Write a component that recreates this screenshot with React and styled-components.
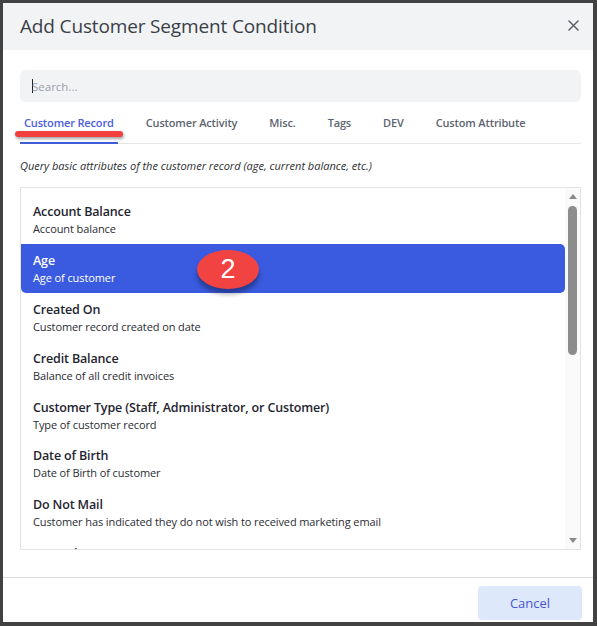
import React from "react";
import styled, { createGlobalStyle } from "styled-components";

const Global = createGlobalStyle`
  html, body { margin: 0; padding: 0; background: #424242; }
  * { box-sizing: border-box; }
  body { font-family: "Open Sans", "Noto Sans", sans-serif; }
`;

const Frame = styled.div`
  width: 597px;
  height: 626px;
  padding: 3px 4px 4px 3px;
  background: #424242;
`;

const Dialog = styled.div`
  position: relative;
  width: 100%;
  height: 100%;
  background: #fff;
  display: flex;
  flex-direction: column;
`;

const Header = styled.div`
  height: 47px;
  flex: none;
  background: #f2f3f5;
  display: flex;
  align-items: center;
  justify-content: space-between;
  padding: 0 10px 2px 17px;
`;

const Title = styled.h1`
  margin: 0;
  font-size: 19px;
  font-weight: 400;
  color: #3a3f47;
  letter-spacing: -0.15px;
`;

const CloseBtn = styled.button`
  width: 20px;
  height: 20px;
  border: 0;
  padding: 0;
  background: transparent;
  display: flex;
  align-items: center;
  justify-content: center;
  color: #5b6069;
`;

const Body = styled.div`
  flex: 1;
  padding: 20px 12px 0 17px;
  display: flex;
  flex-direction: column;
`;

const Search = styled.div`
  height: 32px;
  background: #f2f3f5;
  border-radius: 6px;
  display: flex;
  align-items: center;
  padding-left: 12px;
  font-size: 11.5px;
  color: #9aa0a8;
`;

const Caret = styled.span`
  width: 1px;
  height: 14px;
  background: #222;
  margin-right: -1px;
`;

const Tabs = styled.div`
  height: 42px;
  display: flex;
  gap: 24px;
  padding-bottom: 3px;
  border-bottom: 1px solid #e4e6ea;
`;

const Tab = styled.div`
  padding: 0 4px;
  display: flex;
  align-items: center;
  font-size: 11px;
  font-weight: 600;
  color: ${(p) => (p.$active ? "#4b5ce0" : "#5d6470")};
  border-bottom: 2px solid ${(p) => (p.$active ? "#3f5bd8" : "transparent")};
  margin-bottom: -4px;
  letter-spacing: -0.15px;
`;

const Desc = styled.p`
  margin: 14px 0 13px;
  font-size: 11px;
  line-height: 16px;
  font-style: italic;
  color: #2c2f33;
`;

const ListBox = styled.div`
  height: 363px;
  border: 1px solid #e2e3e6;
  display: flex;
  overflow: hidden;
`;

const Items = styled.div`
  flex: 1;
  padding-top: 7px;
  overflow: hidden;
`;

const Item = styled.div`
  height: 48.8px;
  padding: 2px 12px 0;
  display: flex;
  flex-direction: column;
  justify-content: center;
  border-radius: 0 5px 5px 5px;
  background: ${(p) => (p.$selected ? "#3a5be0" : "transparent")};
  color: ${(p) => (p.$selected ? "#ffffff" : "#1f2530")};
`;

const ItemTitle = styled.div`
  font-size: 12.5px;
  line-height: 17px;
  font-weight: 600;
  letter-spacing: -0.15px;
`;

const ItemSub = styled.div`
  margin-top: 1px;
  font-size: 11px;
  line-height: 16px;
  color: ${(p) => (p.$selected ? "#ffffff" : "#2a2d33")};
  letter-spacing: -0.1px;
`;

const ScrollTrack = styled.div`
  width: 15px;
  flex: none;
  background: #fafafa;
  display: flex;
  flex-direction: column;
  align-items: center;
  padding: 4px 0;
`;

const Arrow = styled.div`
  width: 0;
  height: 0;
  border-left: 4px solid transparent;
  border-right: 4px solid transparent;
  ${(p) =>
    p.$down
      ? "border-top: 5px solid #8a8a8a;"
      : "border-bottom: 5px solid #8a8a8a;"}
  margin: 2px 0;
`;

const Thumb = styled.div`
  width: 9px;
  height: 149px;
  background: #8c8c8c;
  border-radius: 5px;
  margin-top: 5px;
`;

const Spacer = styled.div`
  flex: 1;
`;

const Footer = styled.div`
  height: 45px;
  flex: none;
  border-top: 1px solid #dcdde0;
  display: flex;
  justify-content: flex-end;
  align-items: flex-start;
  padding: 8px 11px 0 0;
`;

const CancelBtn = styled.button`
  width: 104px;
  height: 34px;
  border: 0;
  border-radius: 4px;
  background: #dde8fb;
  color: #4655d6;
  font-family: inherit;
  font-size: 13px;
`;

const Underline = styled.div`
  position: absolute;
  left: 12px;
  top: 128px;
  width: 108px;
  height: 6px;
  border-radius: 3px;
  background: #f2403f;
  box-shadow: 1px 2px 3px rgba(0, 0, 0, 0.35);
`;

const Badge = styled.div`
  position: absolute;
  left: 194px;
  top: 247px;
  width: 62px;
  height: 39px;
  border-radius: 50%;
  background: #f24343;
  color: #fff;
  display: flex;
  align-items: center;
  justify-content: center;
  font-family: "Liberation Sans", Arial, sans-serif;
  font-size: 27px;
  box-shadow: 0 5px 5px rgba(0, 0, 0, 0.35);
`;

const items = [
  ["Account Balance", "Account balance"],
  ["Age", "Age of customer"],
  ["Created On", "Customer record created on date"],
  ["Credit Balance", "Balance of all credit invoices"],
  ["Customer Type (Staff, Administrator, or Customer)", "Type of customer record"],
  ["Date of Birth", "Date of Birth of customer"],
  ["Do Not Mail", "Customer has indicated they do not wish to received marketing email"],
  ["Fax Only", "Customer prefers fax"],
];

const tabs = ["Customer Record", "Customer Activity", "Misc.", "Tags", "DEV", "Custom Attribute"];

export default function App() {
  return (
    <Frame>
      <Global />
      <Dialog>
        <Header>
          <Title>Add Customer Segment Condition</Title>
          <CloseBtn aria-label="Close">
            <svg width="11" height="11" viewBox="0 0 11 11">
              <path d="M1 1 L10 10 M10 1 L1 10" stroke="currentColor" strokeWidth="1.5" strokeLinecap="round" />
            </svg>
          </CloseBtn>
        </Header>
        <Body>
          <Search>
            <Caret />
            Search...
          </Search>
          <Tabs>
            {tabs.map((t, i) => (
              <Tab key={t} $active={i === 0}>
                {t}
              </Tab>
            ))}
          </Tabs>
          <Desc>Query basic attributes of the customer record (age, current balance, etc.)</Desc>
          <ListBox>
            <Items>
              {items.map(([t, s], i) => (
                <Item key={t} $selected={i === 1}>
                  <ItemTitle>{t}</ItemTitle>
                  <ItemSub $selected={i === 1}>{s}</ItemSub>
                </Item>
              ))}
            </Items>
            <ScrollTrack>
              <Arrow />
              <Thumb />
              <Spacer />
              <Arrow $down />
            </ScrollTrack>
          </ListBox>
          <Spacer />
        </Body>
        <Footer>
          <CancelBtn>Cancel</CancelBtn>
        </Footer>
        <Underline />
        <Badge>2</Badge>
      </Dialog>
    </Frame>
  );
}
